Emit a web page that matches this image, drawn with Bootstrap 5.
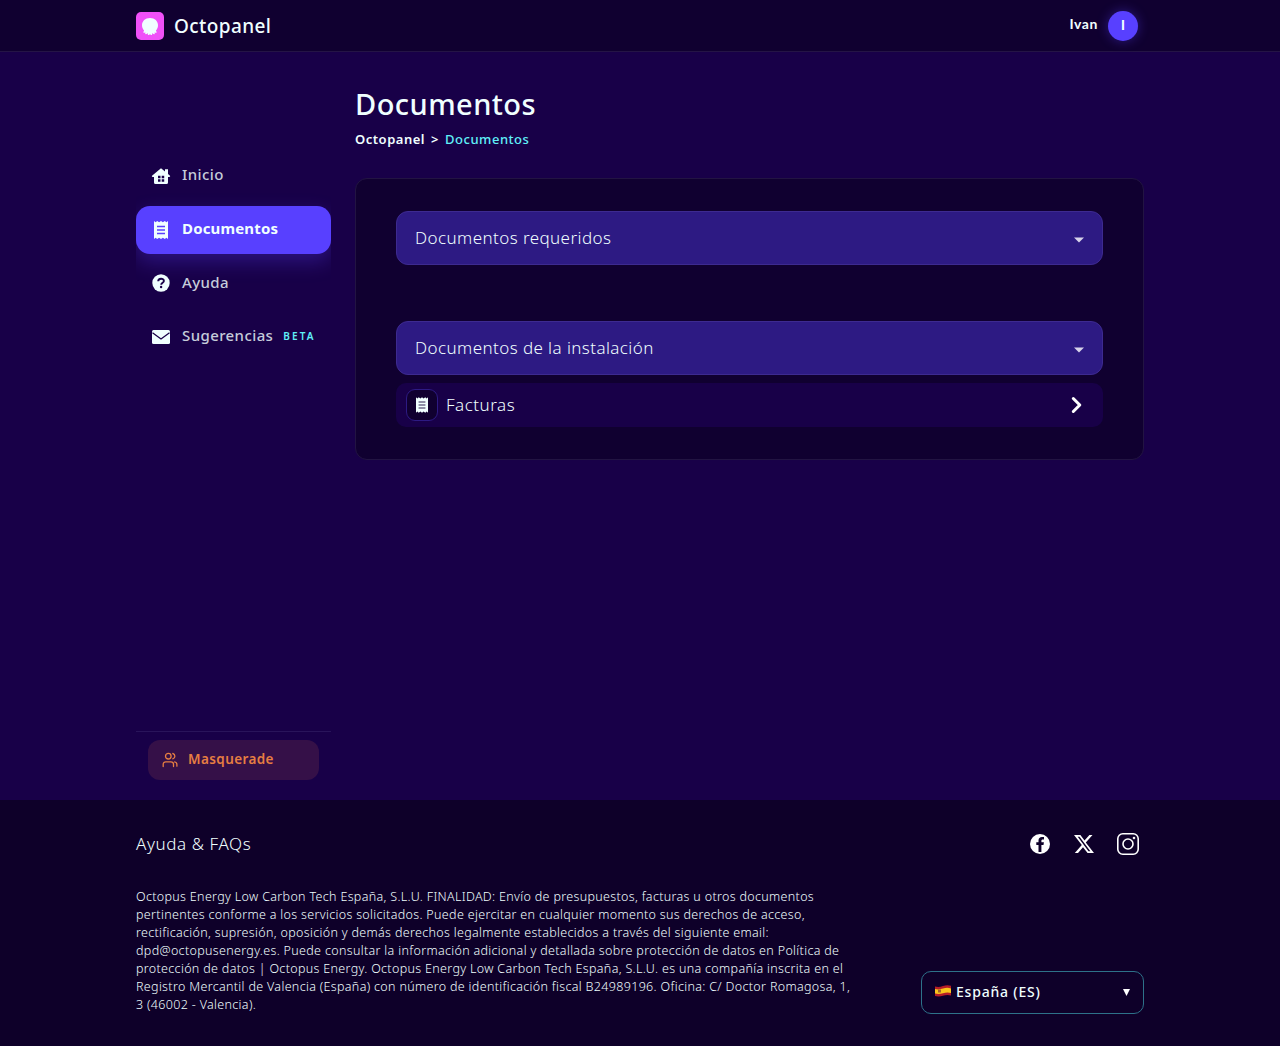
<!DOCTYPE html>
<html lang="es">
<head>
  <meta charset="UTF-8">
  <meta name="viewport" content="width=device-width, initial-scale=1.0">
  <title>Documentos - Octopanel</title>
  <link href="https://cdn.jsdelivr.net/npm/bootstrap@5.3.0/dist/css/bootstrap.min.css" rel="stylesheet">
  <style>
    body { font-family: "Noto Sans", "Open Sans", sans-serif; background: #180048; color: #f0ffff; height: 1046px; overflow: hidden; }
    a { color: inherit; text-decoration: none; }
    svg { display: block; flex-shrink: 0; }
    .wrap { width: 1008px; margin: 0 auto; }
    .topbar { height: 52px; background: #100030; border-bottom: 1px solid #241445; }
    .brand-name { font-size: 19px; font-weight: 500; line-height: 26px; letter-spacing: .4px; margin-left: 10px; }
    .user-area { gap: 10px; padding-right: 6px; }
    .user-name { font-family: Lato, "Noto Sans", sans-serif; font-size: 14px; font-weight: 700; line-height: 20px; letter-spacing: .6px; padding-bottom: 3px; }
    .avatar { width: 30px; height: 30px; background: #5840ff; font-family: Lato, "Noto Sans", sans-serif; font-size: 13px; font-weight: 900; box-shadow: 0 0 12px rgba(88, 64, 255, .4); }
    .page { height: 748px; }
    .side { width: 195px; padding-top: 100px; }
    .side-links { gap: 5.7px; overflow: hidden; padding-bottom: 24px; }
    .side-link { height: 48px; padding: 0 15px; gap: 11px; border-radius: 14px; font-size: 15px; font-weight: 500; letter-spacing: .4px; color: #c5ccda; }
    .side-link svg { color: #f0ffff; }
    .side-link span { padding-bottom: 3px; white-space: nowrap; }
    .side-link.current { background: #5840ff; color: #f0ffff; font-weight: 700; letter-spacing: .15px; box-shadow: 0 8px 20px rgba(88, 64, 255, .3); }
    .side-link .beta { font-size: 10px; font-weight: 600; letter-spacing: 2.1px; color: #60f0f8; margin-left: -1px; padding-bottom: 1px; }
    .masq-area { border-top: 1px solid #29145a; padding: 8px 12px 20px; }
    .masq { height: 40px; border-radius: 12px; background: #351048; color: #e67e42; font-size: 13.5px; font-weight: 600; letter-spacing: .4px; padding: 0 14px; gap: 10px; }
    .masq span { padding-bottom: 2px; }
    .content { width: 789px; padding-top: 34px; }
    h1 { font-size: 29px; font-weight: 500; line-height: 36px; letter-spacing: .45px; margin: 0; }
    .crumbs { font-size: 13px; line-height: 20px; font-weight: 600; letter-spacing: .52px; margin-top: 7px; }
    .crumbs .sep { margin: 0 6px; }
    .crumbs .here { color: #60f0f8; font-weight: 500; }
    .panel { margin-top: 29px; height: 282px; padding: 32px 40px; border: 1px solid #221442; border-radius: 12px; background: #100030; }
    .picker { height: 54px; padding: 0 17px 0 18px; border: 1px solid #3d2a90; border-radius: 12px; background: #2d1a83; font-size: 17px; font-weight: 300; letter-spacing: .42px; }
    .picker svg { margin-top: 3px; }
    .picker + .picker { margin-top: 56px; }
    .bill-row { height: 44px; margin-top: 8px; padding: 0 20px 0 10px; border-radius: 10px; background: #180048; font-size: 17px; font-weight: 300; letter-spacing: .5px; }
    .bill-icon { width: 32px; height: 32px; border: 1px solid #2d1a83; border-radius: 9px; background: #100030; }
    .foot { height: 246px; background: #0e0029; padding-top: 32px; }
    .faq { font-size: 17px; font-weight: 300; line-height: 24px; letter-spacing: .6px; }
    .socials { padding-right: 5px; }
    .insta { margin-left: -1px; }
    .legal { width: 725px; font-size: 12.5px; font-weight: 350; line-height: 18px; letter-spacing: .33px; margin: 32px 0 0; white-space: nowrap; color: #f0ffff; }
    .country { width: 223px; height: 43px; border: 1px solid #2d7189; border-radius: 10px; font-size: 14px; font-weight: 500; letter-spacing: .8px; padding: 0 13px; }
    .country span { margin-left: 5px; padding-bottom: 2px; }
    .flag { margin-bottom: 3px; }
  </style>
</head>
<body>
  <svg width="0" height="0" class="position-absolute">
    <symbol id="receipt" viewBox="0 0 14 18">
      <path fill="currentColor" d="M0 0l1.6 1.3L3.2 0l1.900 1.300L7 0l1.900 1.300L10.800 0l1.600 1.300L14 0v18l-1.600-1.300-1.600 1.300-1.900-1.300L7 18l-1.900-1.300L3.200 18l-1.600-1.300L0 18z"/>
      <path stroke="var(--lines)" stroke-width="1.5" d="M3 5.500h8M3 9h8M3 12.500h8"/>
    </symbol>
  </svg>

  <header class="topbar">
    <div class="wrap h-100 d-flex justify-content-between align-items-center">
      <a href="#" class="d-flex align-items-center">
        <svg width="28" height="28" viewBox="0 0 28 28">
          <rect width="28" height="28" rx="5" fill="#f050f8"/>
          <path fill="#f0ffff" d="M14 6c-4.800 0-8 3.100-8 7.300 0 2.400 1 4 2 5.200.4.700-.8.900-.7 1.700.2.800 1.500.6 2.300.2-.3.700-.7 1.200-.2 1.700.8.500 1.800-.1 2.400-1 .1.800-.2 1.800.5 2 .8.200 1-.9 1.700-.9s.9 1.100 1.700.9c.7-.2.400-1.200.5-2 .6.900 1.600 1.500 2.400 1 .5-.5.100-1-.2-1.700.8.400 2.100.6 2.300-.2.100-.8-1.100-1-.7-1.700 1-1.200 2-2.800 2-5.200C22 9.100 18.800 6 14 6z"/>
        </svg>
        <span class="brand-name">Octopanel</span>
      </a>
      <div class="user-area d-flex align-items-center">
        <span class="user-name">Ivan</span>
        <span class="avatar rounded-circle d-flex justify-content-center align-items-center">I</span>
      </div>
    </div>
  </header>

  <div class="page wrap d-flex justify-content-between">
    <aside class="side d-flex flex-column justify-content-between">
      <nav class="side-links d-flex flex-column">
        <a href="#" class="side-link d-flex align-items-center">
          <svg width="20" height="20" viewBox="0 0 20 20"><path fill="currentColor" fill-rule="evenodd" d="M10 2.200l4 3.300V3.300h3v4.700l2 1.800c.4.600 0 1.200-.6 1.200H17v5.500a1.500 1.500 0 0 1-1.500 1.500h-11A1.500 1.500 0 0 1 3 16.500V11H1.600c-.6 0-1-.6-.6-1.200zM7 9.700v2.500h2.500V9.700zm3.700 0v2.500h2.500V9.700zM7 13.200v2.500h2.500v-2.500zm3.700 0v2.500h2.500v-2.500z"/></svg>
          <span>Inicio</span>
        </a>
        <a href="#" class="side-link current d-flex align-items-center">
          <svg width="20" height="18" style="--lines:#5840ff"><use href="#receipt" x="3" width="14" height="18"/></svg>
          <span>Documentos</span>
        </a>
        <a href="#" class="side-link d-flex align-items-center">
          <svg width="20" height="20" viewBox="0 0 20 20"><circle cx="10" cy="10" r="8.700" fill="currentColor"/><path fill="none" stroke="#180048" stroke-width="1.900" d="M7.200 8.300c0-3.400 5.700-3.300 5.700-.3 0 1.900-2.700 1.700-2.700 3.800"/><circle cx="10.100" cy="14" r="1.200" fill="#180048"/></svg>
          <span>Ayuda</span>
        </a>
        <a href="#" class="side-link d-flex align-items-center">
          <svg width="20" height="20" viewBox="0 0 20 20"><rect x="1" y="3" width="18" height="14" rx="1.500" fill="currentColor"/><path fill="none" stroke="#180048" stroke-width="1.300" d="M1.500 5.700L10 12l8.500-6.300"/></svg>
          <span>Sugerencias</span>
          <span class="beta">BETA</span>
        </a>
      </nav>
      <div class="masq-area">
        <a href="#" class="masq d-flex align-items-center">
          <svg width="16" height="16" viewBox="0 0 16 16" fill="none" stroke="currentColor" stroke-width="1.300" stroke-linecap="round"><circle cx="6.300" cy="4.200" r="2.800"/><path d="M1.200 14.500v-2.200a2.500 2.500 0 0 1 2.500-2.500H9a2.500 2.500 0 0 1 2.500 2.500v2.200M10.800 1.500a2.800 2.800 0 0 1 0 5.400M12.700 9.900a2.600 2.600 0 0 1 2.200 2.500v1.800"/></svg>
          <span>Masquerade</span>
        </a>
      </div>
    </aside>

    <main class="content">
      <h1>Documentos</h1>
      <div class="crumbs d-flex">
        <a href="#">Octopanel</a><span class="sep">&gt;</span><span class="here">Documentos</span>
      </div>
      <section class="panel">
        <div class="picker d-flex justify-content-between align-items-center">
          <span>Documentos requeridos</span>
          <svg width="12" height="6" viewBox="0 0 12 6"><path fill="#d7d3ea" d="M1 .5h10L6 5.500z"/></svg>
        </div>
        <div class="picker d-flex justify-content-between align-items-center">
          <span>Documentos de la instalación</span>
          <svg width="12" height="6" viewBox="0 0 12 6"><path fill="#d7d3ea" d="M1 .5h10L6 5.500z"/></svg>
        </div>
        <a href="#" class="bill-row d-flex align-items-center">
          <span class="bill-icon d-flex justify-content-center align-items-center">
            <svg width="12" height="16" style="--lines:#6f6c8c"><use href="#receipt" width="12" height="16"/></svg>
          </span>
          <span class="ms-2 me-auto">Facturas</span>
          <svg width="14" height="18" viewBox="0 0 14 18" fill="none" stroke="#fff" stroke-width="3" stroke-linecap="round" stroke-linejoin="round"><path d="M4.300 2.500L10.800 9l-6.500 6.500"/></svg>
        </a>
      </section>
    </main>
  </div>

  <footer class="foot">
    <div class="wrap">
      <div class="d-flex justify-content-between align-items-center">
        <a href="#" class="faq">Ayuda &amp; FAQs</a>
        <div class="socials d-flex align-items-center gap-4">
          <svg width="20" height="20" viewBox="0 0 20 20"><circle cx="10" cy="10" r="10" fill="#fff"/><path fill="#0e0029" d="M8.500 18v-7H6.300V8.200h2.200V6.500c0-2.400 1.300-3.600 3.500-3.600l2 .2v2.300h-1.200c-1.100 0-1.400.6-1.400 1.300v1.500h2.500l-.4 2.800h-2.100v7z"/></svg>
          <svg width="20" height="18" viewBox="0 0 20 18"><path fill="#fff" fill-rule="evenodd" d="M0 0h6.400l4.100 5.500L15.400 0h3.100l-6.700 7.500L20 18h-6.400L9 12.300 4 18H.8l7-8.100zM3.700 1.700L14.500 16.300h1.900L5.500 1.700z"/></svg>
          <svg class="insta" width="22" height="22" viewBox="0 0 22 22" fill="none" stroke="#fff" stroke-width="1.600"><rect x=".8" y=".8" width="20.400" height="20.400" rx="5"/><circle cx="11" cy="11" r="5"/><circle cx="17" cy="5" r=".5"/></svg>
        </div>
      </div>
      <div class="d-flex justify-content-between align-items-end">
        <p class="legal">Octopus Energy Low Carbon Tech España, S.L.U. FINALIDAD: Envío de presupuestos, facturas u otros documentos<br>
          pertinentes conforme a los servicios solicitados. Puede ejercitar en cualquier momento sus derechos de acceso,<br>
          rectificación, supresión, oposición y demás derechos legalmente establecidos a través del siguiente email:<br>
          dpd@octopusenergy.es. Puede consultar la información adicional y detallada sobre protección de datos en Política de<br>
          protección de datos | Octopus Energy. Octopus Energy Low Carbon Tech España, S.L.U. es una compañía inscrita en el<br>
          Registro Mercantil de Valencia (España) con número de identificación fiscal B24989196. Oficina: C/ Doctor Romagosa, 1,<br>
          3 (46002 - Valencia).</p>
        <div class="country d-flex align-items-center">
          <svg class="flag" width="16" height="12" viewBox="0 0 16 12"><path fill="#b51d28" d="M0 1.500Q4 2.500 8 1t8-.3v9.800q-4-1-8 .3t-8 .3z"/><path fill="#f8c51c" d="M0 4q4 1 8-.4t8-.2V8q-4-1-8 .3T0 8.600z"/><path fill="#a5652b" d="M3 4.500h3v3H3z"/></svg>
          <span class="me-auto">España (ES)</span>
          <svg width="7" height="7" viewBox="0 0 7 7"><path fill="#fff" d="M0 0h7L3.500 7z"/></svg>
        </div>
      </div>
    </div>
  </footer>
  <script src="https://cdn.jsdelivr.net/npm/bootstrap@5.3.0/dist/js/bootstrap.bundle.min.js"></script>
</body>
</html>
